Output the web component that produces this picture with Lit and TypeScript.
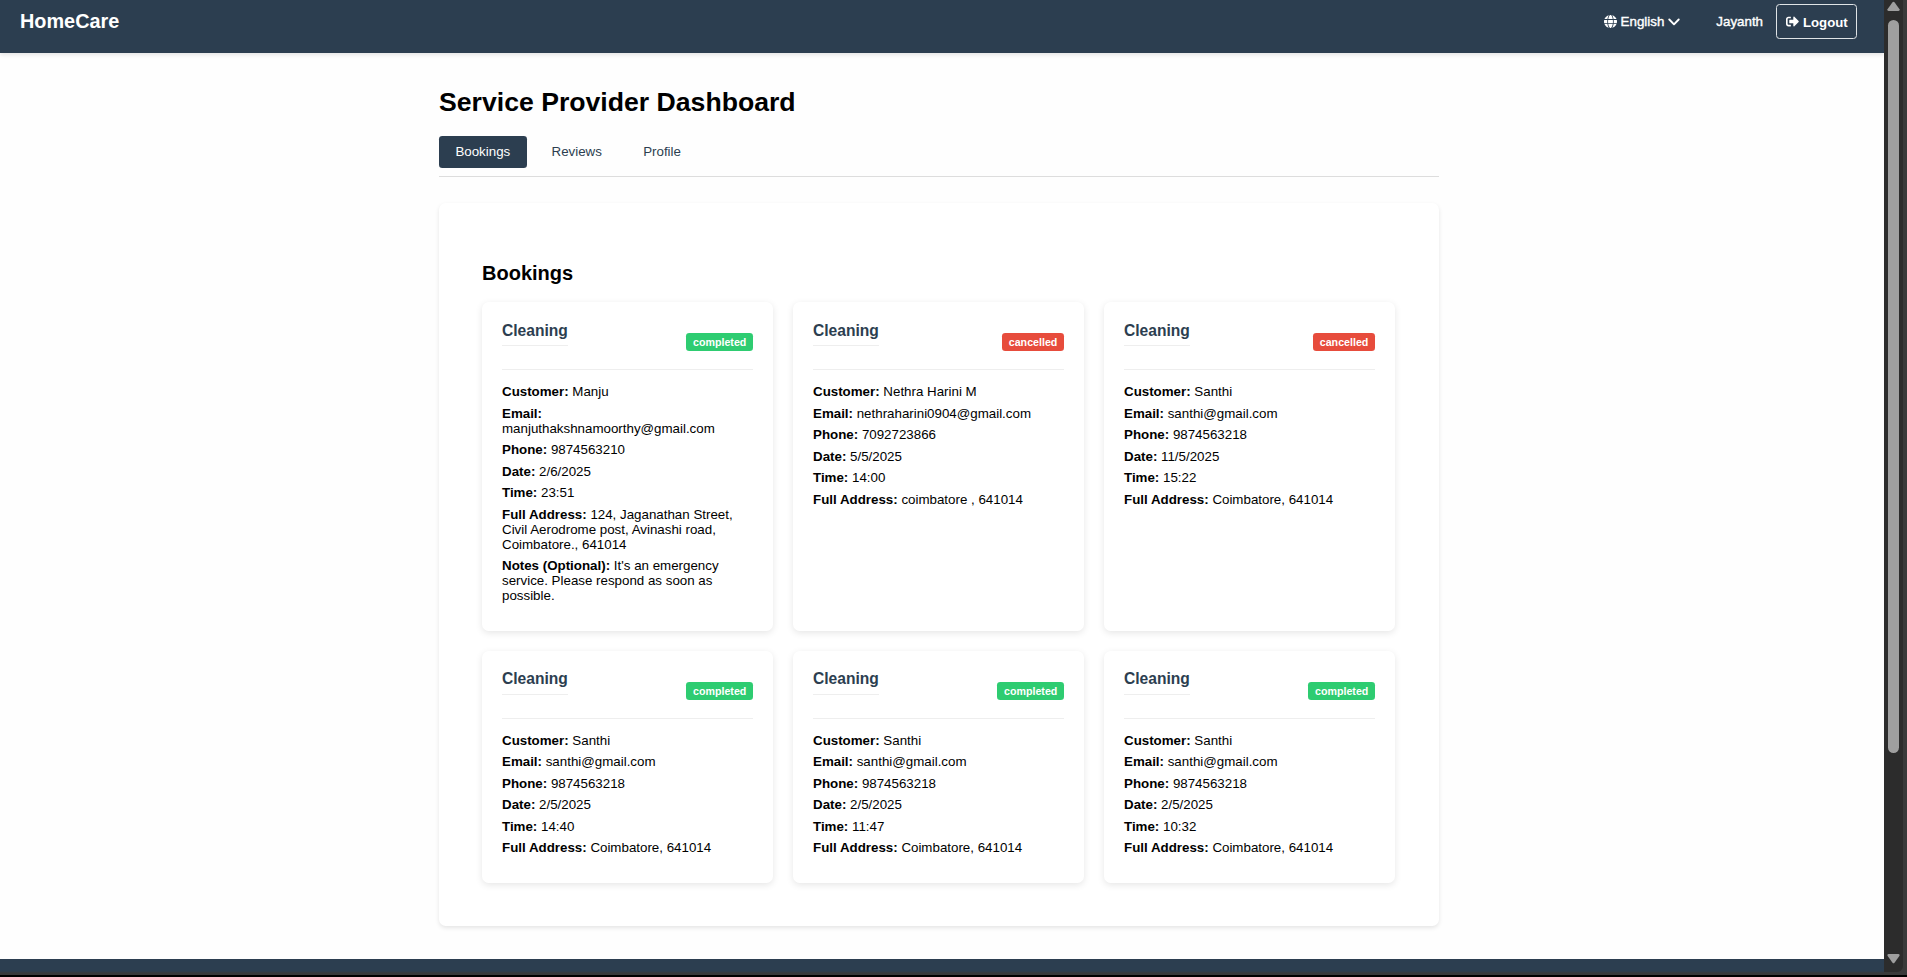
import { LitElement, html, css } from "lit";
import { customElement, property } from "lit/decorators.js";

interface Booking {
  status: "completed" | "cancelled";
  fields: [string, string][];
}

const booking = (
  status: Booking["status"],
  name: string,
  email: string,
  phone: string,
  date: string,
  time: string,
  address: string,
  notes?: string,
): Booking => ({
  status,
  fields: [
    ["Customer:", name],
    ["Email:", email],
    ["Phone:", phone],
    ["Date:", date],
    ["Time:", time],
    ["Full Address:", address],
    ...(notes ? ([["Notes (Optional):", notes]] as [string, string][]) : []),
  ],
});

const santhi = (status: Booking["status"], date: string, time: string) =>
  booking(status, "Santhi", "santhi@gmail.com", "9874563218", date, time, "Coimbatore, 641014");

const BOOKINGS: Booking[] = [
  booking(
    "completed",
    "Manju",
    "manjuthakshnamoorthy@gmail.com",
    "9874563210",
    "2/6/2025",
    "23:51",
    "124, Jaganathan Street, Civil Aerodrome post, Avinashi road, Coimbatore., 641014",
    "It's an emergency service. Please respond as soon as possible.",
  ),
  booking("cancelled", "Nethra Harini M", "nethraharini0904@gmail.com", "7092723866", "5/5/2025", "14:00", "coimbatore , 641014"),
  santhi("cancelled", "11/5/2025", "15:22"),
  santhi("completed", "2/5/2025", "14:40"),
  santhi("completed", "2/5/2025", "11:47"),
  santhi("completed", "2/5/2025", "10:32"),
];

@customElement("booking-card")
class BookingCard extends LitElement {
  @property({ attribute: false }) booking!: Booking;

  static styles = css`
    :host {
      display: block;
      box-sizing: border-box;
      padding: 20px;
      background: #fff;
      border-radius: 6.67px;
      box-shadow: 0 2px 7px rgba(0, 0, 0, 0.1);
    }
    .head {
      display: flex;
      justify-content: space-between;
      align-items: center;
      height: 47px;
      border-bottom: 1px solid #eee;
      margin-bottom: 14.1px;
    }
    .service {
      margin: 0 0 23px;
      padding-bottom: 6px;
      border-bottom: 1px solid #eee;
      font-size: 15.6px;
      line-height: 17.6px;
      color: #2c3e50;
    }
    .badge {
      margin-bottom: 7px;
      padding: 0 6.67px;
      border-radius: 3.33px;
      font-size: 10.67px;
      line-height: 18px;
      font-weight: bold;
      color: #fff;
    }
    .completed { background: #2ecc71; }
    .cancelled { background: #e74c3c; }
    .row {
      margin: 0 0 6.5px;
      line-height: 15px;
      font-size: 13.33px;
    }
  `;

  render() {
    const { status, fields } = this.booking;
    return html`
      <div class="head">
        <h3 class="service">Cleaning</h3>
        <span class="badge ${status}">${status}</span>
      </div>
      ${fields.map(([k, v]) => html`<p class="row"><strong>${k}</strong> ${v}</p>`)}
    `;
  }
}

@customElement("app-root")
class AppRoot extends LitElement {
  static styles = css`
    :host {
      display: grid;
      grid-template-columns: 1884px 23px;
      grid-template-rows: 975px 2px;
      width: 1907px;
      height: 977px;
      overflow: hidden;
      background: #000;
      font-family: "Liberation Sans", Arial, sans-serif;
      font-size: 13.33px;
      color: #000;
    }
    .page {
      display: flex;
      flex-direction: column;
      background: #fefefe;
      min-width: 0;
    }
    .nav {
      flex: none;
      display: flex;
      justify-content: space-between;
      align-items: flex-start;
      box-sizing: border-box;
      height: 53px;
      padding: 4px 27px 0 20px;
      background: #2c3e50;
      color: #fff;
      box-shadow: 0 2px 4px rgba(0, 0, 0, 0.1);
    }
    .brand {
      padding-top: 5px;
      font-size: 19.85px;
      line-height: 24px;
      font-weight: bold;
    }
    .menu { display: flex; align-items: flex-start; }
    .lang, .user {
      margin-top: 10px;
      line-height: 15px;
      font-size: 13.33px;
      -webkit-text-stroke: 0.4px #fff;
    }
    .lang {
      display: flex;
      align-items: center;
      margin-right: 36px;
    }
    .globe { width: 13px; height: 13px; margin-right: 4px; stroke-width: 0; }
    .chevron { width: 12px; height: 8px; margin-left: 4px; }
    .user { margin-right: 13px; }
    .logout {
      display: flex;
      align-items: center;
      box-sizing: border-box;
      width: 81px;
      height: 35px;
      padding: 2px 0 0 9px;
      border: 1px solid #dfe3e6;
      border-radius: 3.5px;
      font-size: 13.2px;
      font-weight: bold;
    }
    .exit { width: 13px; height: 13px; margin: -3px 4px 0 0; }
    .main {
      flex: 1;
      width: 1000px;
      margin-left: 439px;
      padding-top: 34px;
    }
    .title { margin: 0 0 18px; font-size: 26.63px; line-height: 31px; }
    .tabs {
      display: flex;
      gap: 8px;
      height: 32px;
      padding-bottom: 8px;
      border-bottom: 1px solid #ddd;
      margin-bottom: 26px;
    }
    .tab {
      padding: 0 16.9px 0 16.4px;
      line-height: 31px;
      border-radius: 3.33px;
      color: #2c3e50;
    }
    .active { background: #2c3e50; color: #fff; }
    .panel {
      box-sizing: border-box;
      height: 723px;
      padding: 58px 44px 0 43px;
      background: #fff;
      border-radius: 6.67px;
      box-shadow: 0 2px 4px rgba(0, 0, 0, 0.1);
    }
    .heading { margin: 0 0 17px; font-size: 20px; line-height: 24px; }
    .grid {
      display: grid;
      grid-template-columns: repeat(3, 291px);
      grid-template-rows: 328.5px 232.5px;
      gap: 20px;
    }
    .footer {
      height: 16px;
      flex: none;
      background: linear-gradient(#2c3e50 0 12px, #393a3b 14px);
    }
    .frame { padding: 0 4px 3px 0; background: #3a3a3a; }
    .scroll {
      display: flex;
      flex-direction: column;
      align-items: center;
      height: 972px;
      background: #2c2c2c;
      border-radius: 0 0 6px 0;
    }
    .arrow { width: 13px; height: 10px; fill: #9f9f9f; }
    .up { margin: 1px 0 9px; }
    .down { margin: auto 0 8px; }
    .thumb { width: 11px; height: 733px; border-radius: 6px; background: #9f9f9f; }
  `;

  render() {
    return html`
      <div class="page">
        <header class="nav">
          <div class="brand">HomeCare</div>
          <div class="menu">
            <div class="lang">
              <svg class="globe" viewBox="0 0 512 512" fill="#fff"><path d="M352 256c0 22.200-1.200 43.600-3.300 64H163.300c-2.200-20.400-3.300-41.800-3.300-64s1.200-43.600 3.300-64h185.400c2.200 20.400 3.300 41.800 3.300 64zm28.800-64h123.100c5.300 20.500 8.100 41.900 8.100 64s-2.800 43.500-8.100 64H380.800c2.100-20.600 3.200-42 3.200-64s-1.100-43.400-3.200-64zm112.600-32H376.700c-10-63.900-29.800-117.400-55.300-151.600 78.300 20.700 142 77.500 171.900 151.600zm-149.100 0H167.700c6.100-36.400 15.500-68.600 27-94.700 10.500-23.600 22.200-40.700 33.500-51.500C239.400 3.200 248.700 0 256 0s16.600 3.200 27.800 13.800c11.300 10.800 23 27.900 33.500 51.500 11.600 26 20.900 58.200 27 94.700zm-209 0H18.600C48.600 85.900 112.200 29.100 190.600 8.400 165.100 42.600 145.300 96.100 135.300 160zM8.100 192h123.100c-2.100 20.600-3.200 42-3.200 64s1.100 43.400 3.200 64H8.100C2.800 299.500 0 278.100 0 256s2.800-43.500 8.100-64zm186.600 254.600c-11.600-26-20.900-58.200-27-94.600h176.600c-6.100 36.400-15.500 68.600-27 94.600-10.500 23.600-22.200 40.700-33.500 51.500C272.600 508.800 263.300 512 256 512s-16.600-3.200-27.800-13.800c-11.300-10.800-23-27.900-33.500-51.600zM135.300 352c10 63.900 29.800 117.400 55.300 151.600C112.200 482.900 48.600 426.100 18.600 352h116.700zm358.100 0c-30 74.100-93.600 130.900-171.900 151.600 25.500-34.200 45.200-87.700 55.300-151.600h116.700z"/></svg>
              English
              <svg class="chevron" viewBox="0 0 12 8" fill="none" stroke="#fff" stroke-width="1.9" stroke-linecap="round" stroke-linejoin="round"><path d="M1.300 1.500 6 6.300 10.700 1.500"/></svg>
            </div>
            <div class="user">Jayanth</div>
            <div class="logout">
              <svg class="exit" viewBox="0 0 512 512" fill="#fff"><path d="m497 273-168 168c-15 15-41 4.500-41-17v-96H152c-13.300 0-24-10.700-24-24v-96c0-13.300 10.700-24 24-24h136V88c0-21.400 25.900-32 41-17l168 168c9.300 9.400 9.300 24.600 0 34zM192 436v-40c0-6.600-5.400-12-12-12H96c-17.700 0-32-14.300-32-32V160c0-17.700 14.300-32 32-32h84c6.600 0 12-5.400 12-12V76c0-6.600-5.400-12-12-12H96c-53 0-96 43-96 96v192c0 53 43 96 96 96h84c6.600 0 12-5.400 12-12z"/></svg>
              Logout
            </div>
          </div>
        </header>
        <main class="main">
          <h1 class="title">Service Provider Dashboard</h1>
          <div class="tabs">
            <div class="tab active">Bookings</div>
            <div class="tab">Reviews</div>
            <div class="tab">Profile</div>
          </div>
          <section class="panel">
            <h2 class="heading">Bookings</h2>
            <div class="grid">${BOOKINGS.map((b) => html`<booking-card .booking=${b}></booking-card>`)}</div>
          </section>
        </main>
        <div class="footer"></div>
      </div>
      <div class="frame">
        <div class="scroll">
          <svg class="arrow up" viewBox="0 0 13 10"><path d="M5.500 1.300Q6.500 0 7.500 1.300L12.500 8.300Q13 10 11.500 10H1.500Q0 10 .5 8.300Z"/></svg>
          <div class="thumb"></div>
          <svg class="arrow down" viewBox="0 0 13 10"><path d="M5.500 8.700Q6.500 10 7.500 8.700L12.500 1.700Q13 0 11.500 0H1.500Q0 0 .5 1.700Z"/></svg>
        </div>
      </div>
    `;
  }
}
